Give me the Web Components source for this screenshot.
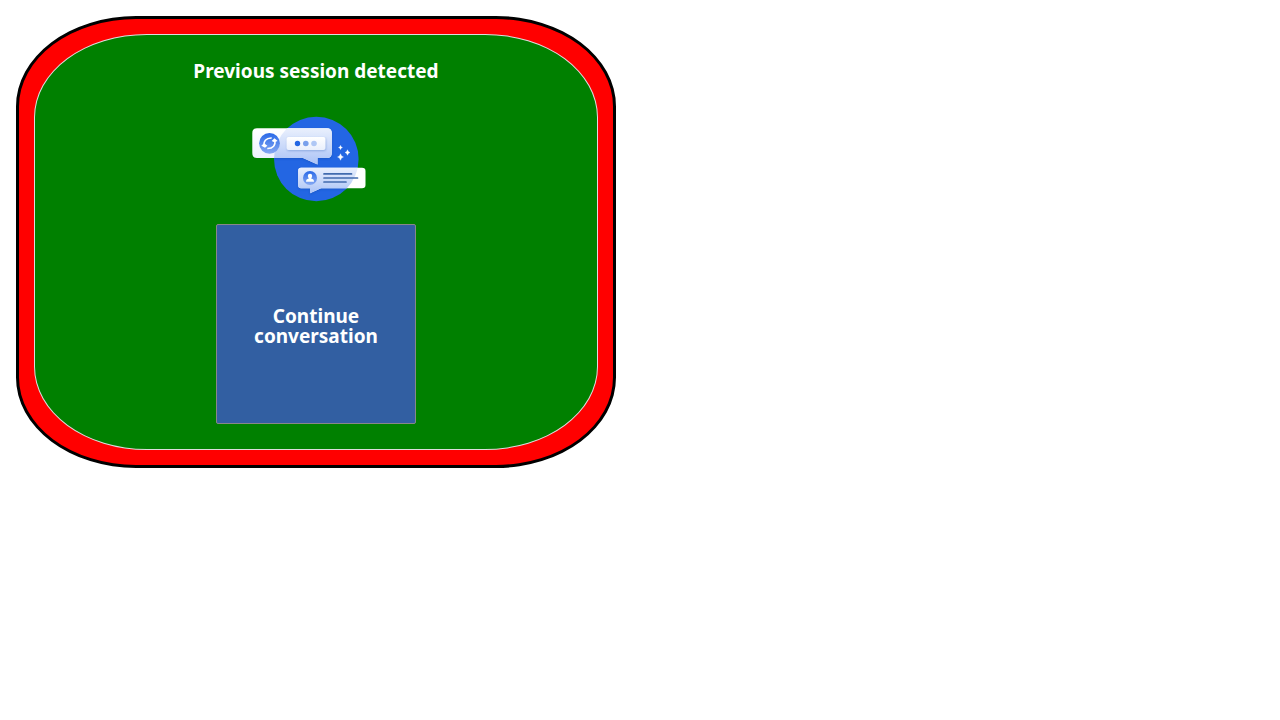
<!DOCTYPE html>
<html lang="en">
<head>
<meta charset="utf-8">
<title>Previous session detected</title>
<style>
body { margin: 16px; background: #fff; font-family: "Segoe UI", "Noto Sans", "Open Sans", sans-serif; }
</style>
</head>
<body>
<session-frame>
  <session-card>
    <span slot="title">Previous session detected</span>
    <chat-illustration slot="art"></chat-illustration>
    <continue-button slot="action">Continue conversation</continue-button>
  </session-card>
</session-frame>
<script>
function define(name, html) {
  const template = document.createElement('template');
  template.innerHTML = html;
  customElements.define(name, class extends HTMLElement {
    constructor() {
      super();
      this.attachShadow({ mode: 'open' }).append(template.content.cloneNode(true));
    }
  });
}

define('session-frame', `
<style>
:host { display: block; box-sizing: border-box; max-width: 600px; padding: 15px; border: 3px solid #000; border-radius: 20%; background: #f00; }
</style>
<slot></slot>`);

define('session-card', `
<style>
:host { display: flex; flex-direction: column; align-items: center; box-sizing: border-box; padding: 25px; border: 1px solid #ddd; border-radius: 20%; background: #008000; color: #fff; }
h1 { margin: 0 0 24px; font-size: 19px; line-height: 22px; font-weight: 700; text-align: center; }
slot[name="art"] { display: block; margin-bottom: 18px; }
</style>
<h1><slot name="title"></slot></h1>
<slot name="art"></slot>
<slot name="action"></slot>`);

define('continue-button', `
<style>
:host { display: block; }
button { display: block; box-sizing: border-box; width: 200px; height: 200px; padding: 8px 24px 4px; border: 1px solid #888; border-radius: 2px; background: #325fa2; color: #fff; font: 700 19px/20px "Segoe UI", "Noto Sans", "Open Sans", sans-serif; text-align: center; cursor: pointer; }
</style>
<button type="button"><slot></slot></button>`);

define('chat-illustration', `
<style>
:host { display: block; }
svg { display: block; }
</style>
<svg width="130" height="100" viewBox="251 106 130 100" aria-hidden="true">
  <defs>
    <linearGradient id="a" x1="0" y1="0" x2="0" y2="1"><stop offset="0" stop-color="#eaf0fd"/><stop offset="1" stop-color="#a9c2f6"/></linearGradient>
    <linearGradient id="w" x1="0" y1="0" x2="0" y2="1"><stop offset="0" stop-color="#fff"/><stop offset="1" stop-color="#e9effc"/></linearGradient>
    <linearGradient id="i" x1="0" y1="0" x2="0" y2="1"><stop offset="0" stop-color="#2868e8"/><stop offset="1" stop-color="#86a9f2"/></linearGradient>
    <filter id="soft" x="-20%" y="-20%" width="140%" height="140%"><feGaussianBlur stdDeviation="1"/></filter>
    <path id="top" d="M257 128.300H327Q331.800 128.300 331.800 133V153Q331.800 158 327 158H317.500V164.500L303 158H257Q252.300 158 252.300 153V133Q252.300 128.300 257 128.300Z"/>
    <path id="low" d="M301 167.700H362Q365.500 167.700 365.500 171V185Q365.500 188.300 362 188.300H321L310 193.300V188.300H301Q298.200 188.300 298.200 185V171Q298.200 167.700 301 167.700Z"/>
    <clipPath id="ct"><use href="#top"/></clipPath>
    <clipPath id="cl"><use href="#low"/></clipPath>
    <clipPath id="disc"><circle cx="316.300" cy="159" r="42.300"/></clipPath>
  </defs>
  <circle cx="316.300" cy="159" r="42.300" fill="#2366e3"/>
  <g clip-path="url(#disc)" fill="#174caa" opacity=".45" filter="url(#soft)"><use href="#top" y="1"/><use href="#low" y="1"/></g>
  <use href="#top" fill="url(#w)"/>
  <g clip-path="url(#ct)"><path d="M272 128H332V165H272Z" fill="url(#a)" clip-path="url(#disc)"/></g>
  <circle cx="269.500" cy="143.300" r="10.400" fill="url(#i)"/>
  <g fill="none" stroke="#fff" stroke-width="1.500">
    <path d="M264.300 146.300C263 141.500 266 137.800 271.700 138M274.700 140.300C276 145.100 273 148.800 267.300 148.600"/>
  </g>
  <path d="M261.300 145.700L264 143.300L267.400 145.700L265 147.800ZM271.600 140.900L274.500 138.300L277.700 141L274.300 142.200Z" fill="#fff"/>
  <rect x="287" y="138" width="39" height="13" rx="2" fill="#557fc8" opacity=".5" filter="url(#soft)"/>
  <rect x="286.500" y="137" width="39" height="13" rx="2" fill="url(#w)"/>
  <circle cx="297.500" cy="143.500" r="2.700" fill="#2366e3"/>
  <circle cx="305.800" cy="143.500" r="2.800" fill="#79a0ec"/>
  <circle cx="314" cy="143.500" r="2.800" fill="#afc7f5"/>
  <use href="#low" fill="#fff"/>
  <g clip-path="url(#cl)"><path d="M298 167H366V194H298Z" fill="url(#a)" clip-path="url(#disc)"/></g>
  <circle cx="310" cy="178" r="7" fill="url(#i)"/>
  <circle cx="310" cy="176" r="2.200" fill="#fff"/>
  <path d="M308.800 177H311.200V178.500Q314 179 314 181.800H306Q306 179 308.800 178.500Z" fill="#fff"/>
  <path d="M324 173.900H351.500M324 178H357.500M324 182H346" stroke="#416bae" stroke-width="1.700" stroke-linecap="round"/>
  <path d="M340.500 145.300Q340.800 147.200 342.500 147.500Q340.800 147.800 340.500 149.700Q340.200 147.800 338.500 147.500Q340.200 147.200 340.500 145.300ZM347.500 149.700Q348 152 350 152.500Q348 153 347.500 155.300Q347 153 345 152.500Q347 152 347.500 149.700ZM340.500 153.700Q341.100 156.400 343.500 157Q341.100 157.600 340.500 160.300Q339.900 157.600 337.500 157Q339.900 156.400 340.500 153.700Z" fill="#fff" stroke="#fff" stroke-width=".3"/>
</svg>`);
</script>
</body>
</html>
